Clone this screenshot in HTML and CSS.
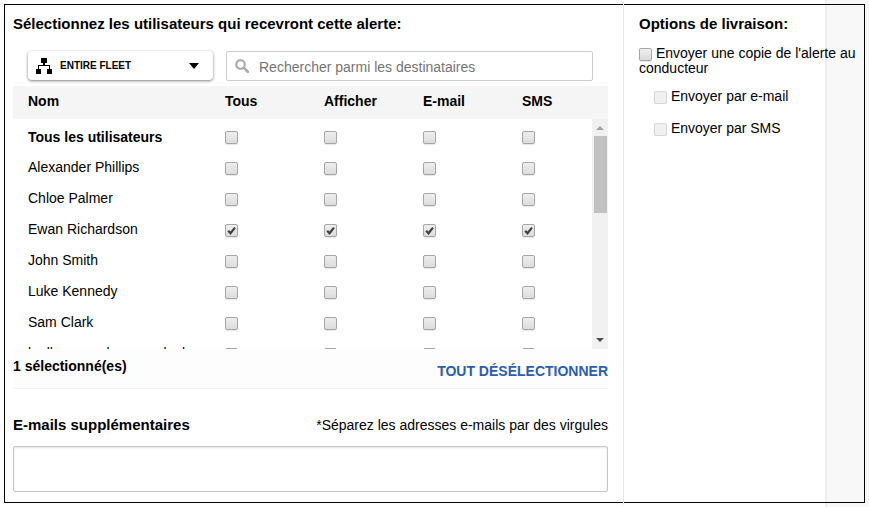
FILE: index.html
```html
<!DOCTYPE html>
<html lang="fr">

<head>
    <meta charset="UTF-8">
    <meta name="viewport" content="width=device-width, initial-scale=1.0">
    <title>Destinataires de l'alerte</title>
    <link rel="stylesheet" href="styles.css">
</head>

<body>
    <div class="frame">
        <main class="recipients">
            <h2 class="title">Sélectionnez les utilisateurs qui recevront cette alerte:</h2>

            <div class="filters">
                <button type="button" class="fleet">
                    <svg class="fleet-icon" width="16" height="16" viewBox="0 0 16 16">
                        <path d="M5 0h6v5H9v2h5v4h2v5h-5v-5h2V8H3v3h2v5H0v-5h2V7h5V5H5z" />
                    </svg>
                    <span class="fleet-name">Entire fleet</span>
                    <svg class="fleet-arrow" width="10" height="6" viewBox="0 0 10 6">
                        <path d="M0 0h10L5 6z" />
                    </svg>
                </button>
                <label class="search">
                    <svg width="14" height="14" viewBox="0 0 14 14" fill="none" stroke="#aaa">
                        <circle cx="5.5" cy="5.5" r="4.3" stroke-width="2.2" />
                        <path d="M8.8 8.8l4.2 4.2" stroke-width="2.6" stroke-linecap="round" />
                    </svg>
                    <input type="text" class="search-input" placeholder="Rechercher parmi les destinataires" aria-label="Rechercher parmi les destinataires">
                </label>
            </div>

            <div class="list">
                <table class="users">
                    <thead>
                        <tr>
                            <th class="name">Nom</th>
                            <th>Tous</th>
                            <th>Afficher</th>
                            <th>E-mail</th>
                            <th class="last">SMS</th>
                        </tr>
                    </thead>
                    <tbody>
                        <tr class="all">
                            <th class="name">Tous les utilisateurs</th>
                            <td><input type="checkbox" aria-label="Tous les utilisateurs, tous"></td>
                            <td><input type="checkbox" aria-label="Tous les utilisateurs, afficher"></td>
                            <td><input type="checkbox" aria-label="Tous les utilisateurs, e-mail"></td>
                            <td><input type="checkbox" aria-label="Tous les utilisateurs, SMS"></td>
                        </tr>
                        <tr>
                            <td class="name">Alexander Phillips</td>
                            <td><input type="checkbox" aria-label="Alexander Phillips, tous"></td>
                            <td><input type="checkbox" aria-label="Alexander Phillips, afficher"></td>
                            <td><input type="checkbox" aria-label="Alexander Phillips, e-mail"></td>
                            <td><input type="checkbox" aria-label="Alexander Phillips, SMS"></td>
                        </tr>
                        <tr>
                            <td class="name">Chloe Palmer</td>
                            <td><input type="checkbox" aria-label="Chloe Palmer, tous"></td>
                            <td><input type="checkbox" aria-label="Chloe Palmer, afficher"></td>
                            <td><input type="checkbox" aria-label="Chloe Palmer, e-mail"></td>
                            <td><input type="checkbox" aria-label="Chloe Palmer, SMS"></td>
                        </tr>
                        <tr>
                            <td class="name">Ewan Richardson</td>
                            <td><input type="checkbox" aria-label="Ewan Richardson, tous" checked></td>
                            <td><input type="checkbox" aria-label="Ewan Richardson, afficher" checked></td>
                            <td><input type="checkbox" aria-label="Ewan Richardson, e-mail" checked></td>
                            <td><input type="checkbox" aria-label="Ewan Richardson, SMS" checked></td>
                        </tr>
                        <tr>
                            <td class="name">John Smith</td>
                            <td><input type="checkbox" aria-label="John Smith, tous"></td>
                            <td><input type="checkbox" aria-label="John Smith, afficher"></td>
                            <td><input type="checkbox" aria-label="John Smith, e-mail"></td>
                            <td><input type="checkbox" aria-label="John Smith, SMS"></td>
                        </tr>
                        <tr>
                            <td class="name">Luke Kennedy</td>
                            <td><input type="checkbox" aria-label="Luke Kennedy, tous"></td>
                            <td><input type="checkbox" aria-label="Luke Kennedy, afficher"></td>
                            <td><input type="checkbox" aria-label="Luke Kennedy, e-mail"></td>
                            <td><input type="checkbox" aria-label="Luke Kennedy, SMS"></td>
                        </tr>
                        <tr>
                            <td class="name">Sam Clark</td>
                            <td><input type="checkbox" aria-label="Sam Clark, tous"></td>
                            <td><input type="checkbox" aria-label="Sam Clark, afficher"></td>
                            <td><input type="checkbox" aria-label="Sam Clark, e-mail"></td>
                            <td><input type="checkbox" aria-label="Sam Clark, SMS"></td>
                        </tr>
                        <tr>
                            <td class="name">loelle roussel sauveraloel</td>
                            <td><input type="checkbox" aria-label="loelle roussel, tous"></td>
                            <td><input type="checkbox" aria-label="loelle roussel, afficher"></td>
                            <td><input type="checkbox" aria-label="loelle roussel, e-mail"></td>
                            <td><input type="checkbox" aria-label="loelle roussel, SMS"></td>
                        </tr>
                    </tbody>
                </table>
                <div class="scrollbar" aria-hidden="true">
                    <svg width="8" height="4" viewBox="0 0 8 4" fill="#a3a3a3">
                        <path d="M4 0l4 4H0z" />
                    </svg>
                    <div class="thumb"></div>
                    <svg width="8" height="4" viewBox="0 0 8 4" fill="#505050">
                        <path d="M0 0h8L4 4z" />
                    </svg>
                </div>
            </div>

            <div class="summary">
                <strong>1 sélectionné(es)</strong>
                <button type="button" class="unselect">Tout désélectionner</button>
            </div>

            <div class="extra">
                <label class="title" for="emails">E-mails supplémentaires</label>
                <span>*Séparez les adresses e-mails par des virgules</span>
            </div>
            <textarea id="emails" class="emails"></textarea>
        </main>

        <aside class="options">
            <h2 class="title">Options de livraison:</h2>
            <label class="option"><input type="checkbox"> Envoyer une copie de l'alerte au conducteur</label>
            <div class="subs">
                <label class="sub"><input type="checkbox" disabled> Envoyer par e-mail</label>
                <label class="sub"><input type="checkbox" disabled> Envoyer par SMS</label>
            </div>
        </aside>
    </div>
</body>

</html>
```
FILE: styles.css
```css
* {
    box-sizing: border-box;
    margin: 0;
    padding: 0;
}

body {
    padding: 4px;
    font: 400 14px/15px "Liberation Sans", Arial, sans-serif;
    color: #000;
    /* grey strip along the right edge */
    background: linear-gradient(to left, #f8f8f8 42px, #eee 42px, #eee 44px, #fff 44px);
}

.frame {
    display: flex;
    min-height: calc(100vh - 8px);
    border: 1px solid #000;
}

.title {
    font-size: 15px;
    font-weight: 700;
    line-height: 18px;
}

.recipients {
    flex: 1;
    min-width: 0;
    padding: 10px 15px 10px 8px;
}

.filters {
    display: flex;
    gap: 13px;
    padding: 18px 15px 5px 15px;
}

.fleet {
    display: flex;
    align-items: center;
    width: 185px;
    height: 29px;
    padding: 0 14px 0 8px;
    border: none;
    border-radius: 4px;
    background-color: #fff;
    box-shadow: 0 1px 3px rgba(0, 0, 0, 0.5);
    font: 700 10px/14px "Liberation Sans", Arial, sans-serif;
    text-transform: uppercase;
    cursor: pointer;
}

.fleet-name {
    flex: 1;
    padding-left: 8px;
    text-align: left;
}

.search {
    display: flex;
    flex: 1;
    align-items: center;
    gap: 10px;
    height: 30px;
    padding: 0 8px;
    border: 1px solid #ccc;
    border-radius: 2px;
}

.search-input {
    flex: 1;
    min-width: 0;
    padding-top: 2px;
    border: none;
    outline: none;
    background: none;
    font: inherit;
}

.search-input::placeholder {
    color: #757575;
}

.list {
    position: relative;
    height: 263px;
    overflow: hidden;
}

.users {
    width: 100%;
    table-layout: fixed;
    border-collapse: collapse;
}

.users th,
.users td {
    width: 99px;
    height: 31px;
    text-align: left;
    vertical-align: middle;
}

.users .name {
    width: auto;
    padding-left: 15px;
}

.users thead th {
    height: 33px;
    padding-bottom: 3px;
    background-color: #f5f5f5;
}

.users thead .last {
    width: 86px;
}

.users .all > * {
    height: 33px;
    padding-top: 3px;
}

input[type="checkbox"] {
    appearance: none;
    width: 13px;
    height: 13px;
    border: 1px solid #a6a6a6;
    border-radius: 2px;
    background: linear-gradient(#eee, #dcdcdc);
    box-shadow: 0 1px 1px rgba(0, 0, 0, 0.1);
    vertical-align: middle;
}

input[type="checkbox"]:checked {
    background: url("data:image/svg+xml,%3Csvg xmlns='http://www.w3.org/2000/svg' viewBox='0 0 11 11'%3E%3Cpath d='M2.2 5.8l2.3 2.5L9 2.6' fill='none' stroke='%23404040' stroke-width='2.2'/%3E%3C/svg%3E"), linear-gradient(#eee, #dcdcdc);
}

input[type="checkbox"]:disabled {
    border-color: #d6d6d6;
    background: #f0f0f0;
    box-shadow: none;
}

/* lies over the right edge of the table */
.scrollbar {
    position: absolute;
    top: 33px;
    right: 0;
    bottom: 0;
    display: flex;
    flex-direction: column;
    align-items: center;
    width: 16px;
    padding: 7px 0;
    background-color: #f1f1f1;
}

.thumb {
    width: 13px;
    height: 77px;
    margin: 6px 0 auto;
    background-color: #c1c1c1;
}

.summary {
    display: flex;
    justify-content: space-between;
    height: 40px;
    padding-top: 10px;
    border-bottom: 1px solid #f2f2f2;
    background-color: #fdfdfd;
}

.unselect {
    align-self: flex-start;
    margin-top: 5px;
    border: none;
    background: none;
    font: inherit;
    font-weight: 700;
    color: #2b5fad;
    text-transform: uppercase;
    cursor: pointer;
}

.extra {
    display: flex;
    align-items: center;
    justify-content: space-between;
    padding: 27px 0 12px;
}

.emails {
    display: block;
    width: 100%;
    height: 46px;
    padding: 6px;
    border: 1px solid #c6c6c6;
    border-radius: 2px;
    box-shadow: inset 0 1px 2px rgba(0, 0, 0, 0.1);
    background-color: #fff;
    font: inherit;
    resize: none;
}

.options {
    width: 241px;
    margin: -3px 0;
    padding: 13px 4px 0 15px;
    border-left: 1px solid #e6e6e6;
}

.option {
    display: block;
    padding-top: 13px;
}

.subs {
    display: grid;
    gap: 17px;
    padding: 13px 0 0 15px;
}
```
